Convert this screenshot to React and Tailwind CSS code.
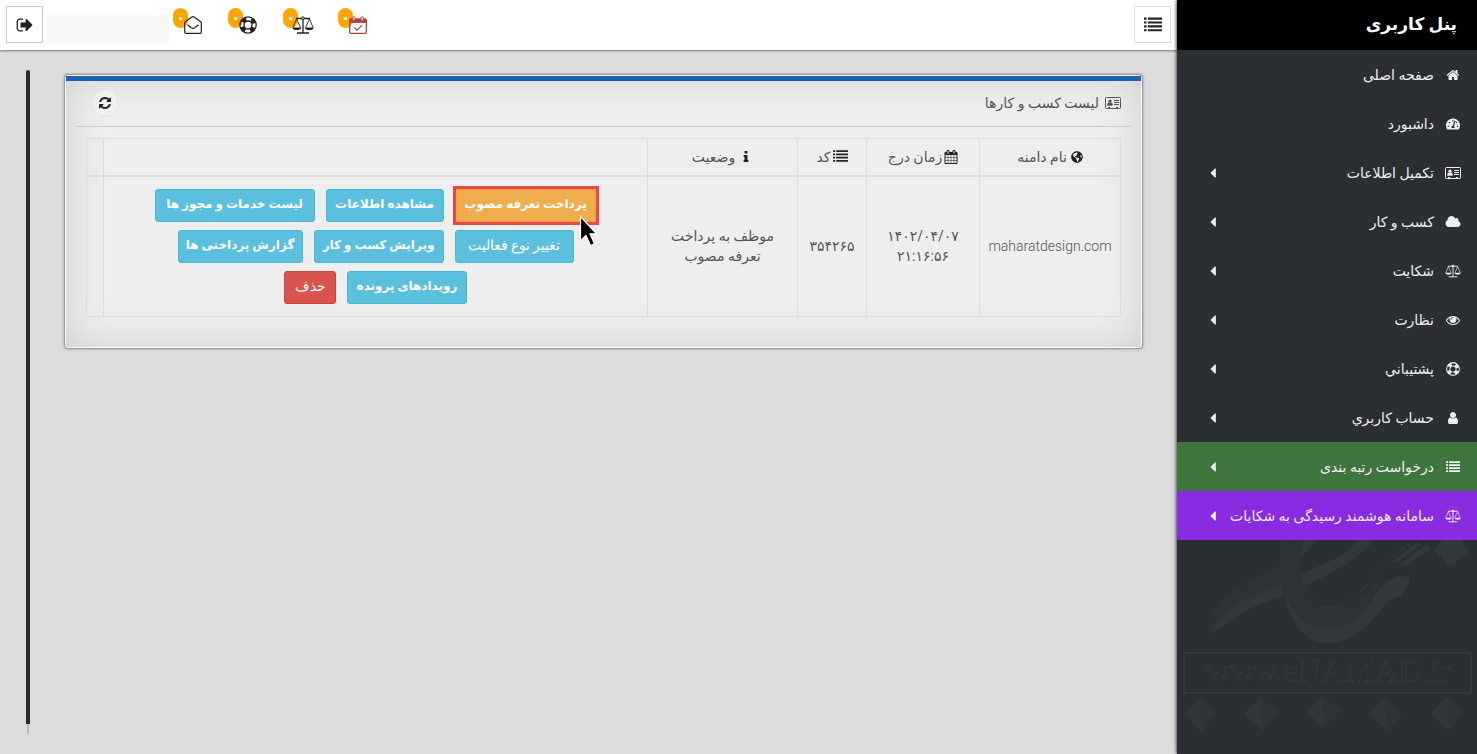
import { clsx } from 'clsx';
import { FaGlobeAmericas, FaTachometerAlt } from 'react-icons/fa';

const paths = {
    home: "M1472 992v480q0 26-19 45t-45 19h-384v-384h-256v384h-384q-26 0-45-19t-19-45v-480q0-1 .5-3t.5-3l575-474 575 474q1 2 1 6zm223-69l-62 74q-8 9-21 11h-3q-13 0-21-7l-692-577-692 577q-12 8-24 7-13-2-21-11l-62-74q-8-10-7-23.5t11-21.5l719-599q32-26 76-26t76 26l244 204v-195q0-14 9-23t23-9h192q14 0 23 9t9 23v408l219 182q10 8 11 21.5t-7 23.5z",
    cloud: "M1984 1152q0 159-112.500 271.500t-271.500 112.500h-1088q-185 0-316.500-131.500t-131.500-316.500q0-132 71-241.500t187-163.500q-2-28-2-43 0-212 150-362t362-150q158 0 286.500 88t187.500 230q70-62 166-62 106 0 181 75t75 181q0 75-41 138 129 30 213 134.500t84 239.500z",
    eye: "M1664 960q-152-236-381-353 61 104 61 225 0 185-131.500 316.500t-316.500 131.500-316.500-131.500-131.500-316.500q0-121 61-225-229 117-381 353 133 205 333.500 326.500t434.500 121.500 434.500-121.500 333.500-326.500zm-720-384q0-20-14-34t-34-14q-125 0-214.500 89.500t-89.500 214.500q0 20 14 34t34 14 34-14 14-34q0-86 61-147t147-61q20 0 34-14t14-34zm848 384q0 34-20 69-140 230-376.500 368.500t-499.500 138.500-499.500-139-376.500-368q-20-35-20-69t20-69q140-229 376.500-368t499.500-139 499.500 139 376.500 368q20 35 20 69z",
    user: "M1536 1399q0 109-62.500 187t-150.500 78h-854q-88 0-150.500-78t-62.500-187q0-85 8.500-160.500t31.500-152 58.500-131 94-89 134.500-34.500q131 128 313 128t313-128q76 0 134.500 34.500t94 89 58.500 131 31.500 152 8.500 160.500zm-256-887q0 159-112.500 271.500t-271.500 112.500-271.500-112.500-112.500-271.500 112.500-271.500 271.500-112.500 271.500 112.500 112.500 271.500z",
    caret: "M1216 448v896q0 26-19 45t-45 19-45-19l-448-448q-19-19-19-45t19-45l448-448q19-19 45-19t45 19 19 45z",
    refresh: "M1639 1056q0 5-1 7-64 268-268 434.500t-478 166.500q-146 0-282.500-55t-243.500-157l-129 129q-19 19-45 19t-45-19-19-45v-448q0-26 19-45t45-19h448q26 0 45 19t19 45-19 45l-137 137q71 66 161 102t187 36q134 0 250-65t186-179q11-17 53-117 8-23 30-23h192q13 0 22.500 9.500t9.500 22.500zm25-800v448q0 26-19 45t-45 19h-448q-26 0-45-19t-19-45 19-45l138-138q-148-137-349-137-134 0-250 65t-186 179q-11 17-53 117-8 23-30 23h-199q-13 0-22.500-9.500t-9.500-22.500v-7q65-268 270-434.500t480-166.500q146 0 284 55.500t245 156.500l130-129q19-19 45-19t45 19 19 45z",
    signOut: "M704 1440q0 4 1 20t.5 26.500-3 23.500-10 19.500-20.500 6.500h-320q-119 0-203.500-84.500t-84.500-203.500v-704q0-119 84.500-203.500t203.500-84.500h320q13 0 22.500 9.500t9.500 22.500q0 4 1 20t.5 26.500-3 23.500-10 19.500-20.500 6.500h-320q-66 0-113 47t-47 113v704q0 66 47 113t113 47h312l11.500 1 11.500 3 8 5.500 7 9 2 13.500zm928-544q0 26-19 45l-544 544q-19 19-45 19t-45-19-19-45v-288h-448q-26 0-45-19t-19-45v-384q0-26 19-45t45-19h448v-288q0-26 19-45t45-19 45 19l544 544q19 19 19 45z",
    info: "M1216 1344v128q0 26-19 45t-45 19h-512q-26 0-45-19t-19-45v-128q0-26 19-45t45-19h64v-384h-64q-26 0-45-19t-19-45v-128q0-26 19-45t45-19h384q26 0 45 19t19 45v576h64q26 0 45 19t19 45zm-128-1152v192q0 26-19 45t-45 19h-256q-26 0-45-19t-19-45v-192q0-26 19-45t45-19h256q26 0 45 19t19 45z",
    calendar: "M192 1664h288v-288h-288v288zm352 0h320v-288h-320v288zm-352-352h288v-320h-288v320zm352 0h320v-320h-320v320zm-352-384h288v-288h-288v288zm736 736h320v-288h-320v288zm-384-736h320v-288h-320v288zm768 736h288v-288h-288v288zm-384-352h320v-320h-320v320zm-352-864v-288q0-13-9.500-22.500t-22.500-9.500h-64q-13 0-22.500 9.500t-9.500 22.500v288q0 13 9.500 22.500t22.500 9.500h64q13 0 22.500-9.500t9.500-22.500zm736 864h288v-320h-288v320zm-384-384h320v-288h-320v288zm384 0h288v-288h-288v288zm32-480v-288q0-13-9.500-22.500t-22.500-9.500h-64q-13 0-22.500 9.500t-9.500 22.500v288q0 13 9.500 22.500t22.500 9.500h64q13 0 22.500-9.500t9.500-22.500zm384-64v1280q0 52-38 90t-90 38h-1408q-52 0-90-38t-38-90v-1280q0-52 38-90t90-38h128v-96q0-66 47-113t113-47h64q66 0 113 47t47 113v96h384v-96q0-66 47-113t113-47h64q66 0 113 47t47 113v96h128q52 0 90 38t38 90z",
    list: "M0 160h256v208h-256zm384 0h1408v208h-1408zM0 544h256v208h-256zm384 0h1408v208h-1408zM0 928h256v208h-256zm384 0h1408v208h-1408zM0 1312h256v208h-256zm384 0h1408v208h-1408z",
};

const Icon = ({ name, className }) => (
    <svg viewBox={name === 'cloud' ? '0 0 2048 1792' : '0 0 1792 1792'} fill="currentColor" className={className} aria-hidden="true">
        <path d={paths[name]} />
    </svg>
);

const CardIcon = ({ className }) => (
    <svg viewBox="0 0 16 12" className={className} aria-hidden="true">
        <rect x="0.5" y="0.5" width="15" height="11" rx="0.8" fill="none" stroke="currentColor" />
        <circle cx="5" cy="4.200" r="1.600" fill="currentColor" />
        <path d="M2.300 8.800V7.500Q2.300 5.600 4 5.600Q5 6.400 6 5.600Q7.700 5.600 7.700 7.500V8.800Z" fill="currentColor" />
        <path d="M9 3.500h5M9 5.500h5M9 7.500h5M3 10.500h2M11 10.500h2" stroke="currentColor" />
    </svg>
);

const ScaleIcon = ({ className }) => (
    <svg viewBox="0 0 22 18" fill="none" stroke="currentColor" className={className} aria-hidden="true">
        <path d="M4 2.500h14M11 3v14M5 17h12" strokeWidth="1.300" />
        <circle cx="11" cy="2" r="1.300" fill="#fff" strokeWidth="0.9" />
        <path d="M4.500 3L1 11.500M4.500 3L8.500 11.500M17.500 3L13.500 11.500M17.500 3L21 11.500" strokeWidth="0.9" />
        <path d="M0.300 11.500h8.900q-.5 2.600-4.400 2.600t-4.500-2.600zM12.800 11.500h8.900q-.5 2.600-4.400 2.600t-4.500-2.600z" fill="currentColor" stroke="none" />
    </svg>
);

const LifeRingIcon = ({ className }) => (
    <svg viewBox="0 0 18 18" fill="none" stroke="currentColor" className={className} aria-hidden="true">
        <circle cx="9" cy="9" r="8.200" strokeWidth="1.300" />
        <circle cx="9" cy="9" r="4" strokeWidth="1.300" />
        <circle cx="9" cy="9" r="6.100" strokeWidth="4.400" strokeDasharray="4.600 4.981" strokeDashoffset="-2.490" />
    </svg>
);

const EnvelopeIcon = ({ className }) => (
    <svg viewBox="0 0 18 18" fill="none" stroke="currentColor" strokeWidth="1.200" className={className} aria-hidden="true">
        <path d="M.7 6.900Q.7 6.300 1.300 5.800L7.500 1.200Q9 .2 10.500 1.200L16.700 5.800Q17.300 6.300 17.300 6.900V16Q17.300 17.300 16 17.300H2Q.7 17.300.7 16Z" />
        <path d="M3.500 8.700L7.400 11.800Q9 13 10.600 11.800L14.500 8.700" />
    </svg>
);

const CalendarCheckIcon = ({ className }) => (
    <svg viewBox="0 0 18 18" fill="none" stroke="currentColor" className={className} aria-hidden="true">
        <rect x=".7" y="3.200" width="16.600" height="14.100" rx="1" strokeWidth="1.300" />
        <path d="M1 3.200h16v3.200H1z" fill="currentColor" />
        <rect x="3.800" y=".8" width="2.200" height="4" rx="1" fill="#fff" />
        <rect x="12" y=".8" width="2.200" height="4" rx="1" fill="#fff" />
        <path d="M5.200 11.400l2.800 2.700 5-5" strokeWidth="1.300" />
    </svg>
);

const menu = [
    { label: 'صفحه اصلی', icon: <Icon name="home" className="w-[14px] h-[14px]" /> },
    { label: 'داشبورد', icon: <FaTachometerAlt className="w-[14px] h-[14px]" /> },
    { label: 'تکمیل اطلاعات', icon: <CardIcon className="w-4 h-3" />, sub: true },
    { label: 'کسب و کار', icon: <Icon name="cloud" className="w-4 h-[14px]" />, sub: true },
    { label: 'شکایت', icon: <ScaleIcon className="w-[18px] h-[14px]" />, sub: true },
    { label: 'نظارت', icon: <Icon name="eye" className="w-[14px] h-[14px]" />, sub: true },
    { label: 'پشتیباني', icon: <LifeRingIcon className="w-[14px] h-[14px]" />, sub: true },
    { label: 'حساب کاربري', icon: <Icon name="user" className="w-[14px] h-[14px]" />, sub: true },
    { label: 'درخواست رتبه بندی', icon: <Icon name="list" className="w-[14px] h-[14px]" />, sub: true, color: 'bg-[#3e763d]' },
    { label: 'سامانه هوشمند رسیدگی به شکایات', icon: <ScaleIcon className="w-[18px] h-[14px]" />, sub: true, color: 'bg-[#892be1]' },
];

const alerts = [
    { label: 'رویدادها', icon: <CalendarCheckIcon className="w-[18px] h-[18px] text-[#a94442]" /> },
    { label: 'شکایات', icon: <ScaleIcon className="w-[22px] h-[18px]" /> },
    { label: 'پشتیبانی', icon: <LifeRingIcon className="w-[18px] h-[18px]" /> },
    { label: 'پیام ها', icon: <EnvelopeIcon className="w-[18px] h-[18px]" /> },
];

const actions = [
    { label: 'پرداخت تعرفه مصوب', kind: 'pay', width: 'w-[140px]' },
    { label: 'مشاهده اطلاعات', width: 'w-[118px]' },
    { label: 'لیست خدمات و مجوز ها', width: 'w-[160px]' },
    { label: 'تغییر نوع فعالیت', light: true, width: 'w-[119px]' },
    { label: 'ویرایش کسب و کار', width: 'w-[130px]' },
    { label: 'گزارش پرداختی ها', width: 'w-[125px]' },
    { label: 'رویدادهای پرونده', width: 'w-[120px]' },
    { label: 'حذف', kind: 'delete', light: true, width: 'w-[52px]' },
];

const ActionButton = ({ label, kind, light, width }) => (
    <button
        className={clsx(
            "relative h-[33px] pb-[2px] border text-white whitespace-nowrap",
            width,
            light ? "text-sm font-light" : "text-xs font-bold",
            kind === 'pay' ? "mx-px bg-[#f0ad4e] border-[#eea236] outline-3 outline-[#e8484a]" : "rounded-[3px]",
            kind === 'delete' && "bg-[#d9534f] border-[#d43f3a]",
            !kind && "bg-[#5bc0de] border-[#46b8da]"
        )}
    >
        {label}
        {kind === 'pay' && (
            <svg viewBox="0 0 18 32" className="absolute -bottom-[26px] -right-[2px] w-[18px] h-8 z-10" aria-hidden="true">
                <path d="M1.500 1.500V25.500L7 20.500L11.500 30.500L15.500 28.700L11 18.800H17.500Z" fill="#000" stroke="#fff" strokeWidth="1.200" />
            </svg>
        )}
    </button>
);

// faded seal behind the lower part of the menu
const Watermark = () => (
    <svg viewBox="0 0 300 214" className="w-full block" aria-hidden="true">
        <path d="M32 82Q40 62 60 49Q82 34 105 25V45Q70 54 34 94Z" fill="#2e3136" stroke="#33373c" strokeWidth="0.6" />
        <path d="M33 95Q44 72 64 62Q86 50 107 43V56Q72 64 33 95Z" fill="#33373c" />
        <path d="M127 46L123 34Q166 18 182 0H198Q172 28 127 46Z" fill="#33373c" />
        <path d="M123 18L126 0H140Z" fill="#33373c" />
        <path d="M105 0V50Q112 92 150 94Q186 92 206 62L200 40Q178 68 153 68Q122 64 124 20V0Z" fill="#2e3136" />
        <path d="M107 54Q118 103 150 103Q186 102 210 60L199 53Q180 89 150 89Q122 88 107 54Z" fill="#33373c" />
        <path d="M199 56Q204 42 222 36Q230 38 233 34Q232 54 214 60Q204 62 199 56Z" fill="#34383d" />
        <path d="M212 24L240 2L244 5L221 22ZM222 25L250 4L254 9L230 25Z" fill="#33373c" />
        <path d="M125 42Q136 68 153 68Q174 66 198 36Q216 12 240 0" fill="none" stroke="#34383d" />
        <path d="M105 26L104 8L106 0" fill="none" stroke="#34383d" />
        <path d="M257 10L266 0H284L292 11L274 27Z" fill="#33373c" />
        <g fill="#32363b">
            <path d="M7 174L23 159L40 173L24 192ZM67 174L83 157L101 171L86 191ZM130 172L145 156L164 171L147 189ZM191 174L208 157L226 174L210 191ZM254 173L270 156L287 172L272 191Z" />
        </g>
        <g fill="#2f3338">
            <path d="M23 159L40 173L24 192ZM83 157L101 171L86 191ZM145 156L164 171L147 189ZM208 157L226 174L210 191ZM270 156L287 172L272 191Z" />
        </g>
        <rect x="7" y="113" width="287" height="40" fill="none" stroke="#34383d" strokeWidth="2" />
        <text x="151" y="142" textAnchor="middle" fontSize="33" fill="#2a2d32" stroke="#373b41" strokeWidth="0.7" fontFamily="Liberation Serif, serif" direction="ltr">www.eNAMAD.ir</text>
    </svg>
);

const Sidebar = () => (
    <aside className="w-[300px] shrink-0 bg-[#2b2e33] text-[#eee] flex flex-col shadow-[0_0_4px_#000] z-10">
        <div className="h-[50px] bg-black flex items-center px-5">
            <h1 className="text-[17px] font-bold text-white">پنل کاربری</h1>
        </div>
        <nav>
            {menu.map((item) => (
                <a key={item.label} href="#" className={clsx("h-[49px] flex items-center pr-4 pl-8 text-sm", item.color)}>
                    <span className="w-4 flex justify-center shrink-0">{item.icon}</span>
                    <span className="mr-[11px] whitespace-nowrap">{item.label}</span>
                    {item.sub && <Icon name="caret" className="w-4 h-4 mr-auto -ml-1 shrink-0" />}
                </a>
            ))}
        </nav>
        <Watermark />
    </aside>
);

const TopBar = () => (
    <header className="h-[50px] bg-white shadow-[0_1px_2px_#777] flex items-center justify-between px-[6px] pb-px z-[5]">
        <button aria-label="منو" className="w-[37px] h-[37px] border border-[#ddd] flex items-center justify-center">
            <Icon name="list" className="w-[18px] h-[18px]" />
        </button>
        <div className="flex items-center">
            <div className="flex items-center gap-[37px] ml-[33px]">
                {alerts.map((item) => (
                    <a key={item.label} href="#" aria-label={item.label} className="relative w-[18px] flex justify-center">
                        <span className="absolute right-[14px] -top-[8px] w-[15px] h-5 rounded-full bg-[#ffa500] text-white text-base font-bold flex items-center justify-center">۰</span>
                        <span className="relative shrink-0">{item.icon}</span>
                    </a>
                ))}
            </div>
            <div className="w-[123px] h-7 bg-[#f7f7f7] mt-2 -mr-[18px]" />
            <button aria-label="خروج" className="w-[37px] h-[37px] border border-[#ccc] flex items-center justify-center mr-[3px]">
                <Icon name="signOut" className="w-[18px] h-[18px]" />
            </button>
        </div>
    </header>
);

const Businesses = () => (
    <section className="relative flex-1 rounded-[4px] border border-[#999] bg-[#eee] shadow-[0_0_3px_#999,inset_0_0_0_1px_#fff,inset_0_0_40px_#ccc] px-[11px] pt-[6px] pb-[31px]">
        <div className="absolute top-px inset-x-px h-[5px] bg-[#1e5fb3]" />
        <div className="h-[46px] pb-[2px] flex items-center justify-between px-[10px] border-b border-[#ccc] text-[#555]">
            <h2 className="flex items-center gap-[6px] text-sm">
                <CardIcon className="w-4 h-3" />
                لیست کسب و کارها
            </h2>
            <button aria-label="بارگذاری مجدد" className="w-7 h-7 rounded-full bg-[#f0f0f0] border border-[#e2e2e2] flex items-center justify-center ml-[5px] text-[#222]">
                <Icon name="refresh" className="w-[14px] h-[14px]" />
            </button>
        </div>
        <div className="px-[10px] pt-[11px]">
            <table className="w-full table-fixed border-collapse text-center text-[#555] text-sm leading-5 [&_td]:border [&_td]:border-[#ddd] [&_th]:border [&_th]:border-[#ddd] [&_th]:border-b-2 [&_th]:font-normal">
                <colgroup>
                    <col className="w-[141px]" />
                    <col className="w-[113px]" />
                    <col className="w-[69px]" />
                    <col className="w-[150px]" />
                    <col />
                    <col className="w-[17px]" />
                </colgroup>
                <thead>
                    <tr className="h-[37px]">
                        <th><span className="flex items-center justify-center gap-1"><FaGlobeAmericas className="w-3 h-3 text-[#222]" />نام دامنه</span></th>
                        <th><span className="flex items-center justify-center gap-[2px]"><Icon name="calendar" className="w-[14px] h-[14px] text-[#222]" />زمان درج</span></th>
                        <th><span className="flex items-center justify-center gap-[2px]"><Icon name="list" className="w-[15px] h-[15px] text-[#222]" />کد</span></th>
                        <th><span className="flex items-center justify-center gap-1"><Icon name="info" className="w-[14px] h-[14px] text-[#222]" />وضعیت</span></th>
                        <th />
                        <th />
                    </tr>
                </thead>
                <tbody>
                    <tr className="h-[141px]">
                        <td className="font-light">maharatdesign.com</td>
                        <td>۱۴۰۲/۰۴/۰۷<br />۲۱:۱۶:۵۶</td>
                        <td>۳۵۴۲۶۵</td>
                        <td className="px-5">موظف به پرداخت تعرفه مصوب</td>
                        <td>
                            <div className="flex flex-wrap justify-center gap-x-[11px] gap-y-2 px-[10px]">
                                {actions.map((action) => <ActionButton key={action.label} {...action} />)}
                            </div>
                        </td>
                        <td />
                    </tr>
                </tbody>
            </table>
        </div>
    </section>
);

export default function App() {
    return (
        <div dir="rtl" className="min-h-screen flex bg-[#dcdcdc] text-[#222] font-['Roboto','DejaVu_Sans',sans-serif]">
            <Sidebar />
            <div className="flex-1 min-w-0 flex flex-col">
                <TopBar />
                <main className="flex-1 flex items-stretch pt-5 pb-5 pr-[34px] pl-[26px]">
                    <div className="flex-1 flex items-start pt-[4px]">
                        <Businesses />
                    </div>
                    <div className="w-1 mr-[34px] flex flex-col items-center">
                        <div className="w-1 flex-1 rounded-t-sm bg-[#2b2b2b]" />
                        <div className="w-[2px] h-[10px] bg-[#bbb]" />
                    </div>
                </main>
            </div>
        </div>
    );
}
